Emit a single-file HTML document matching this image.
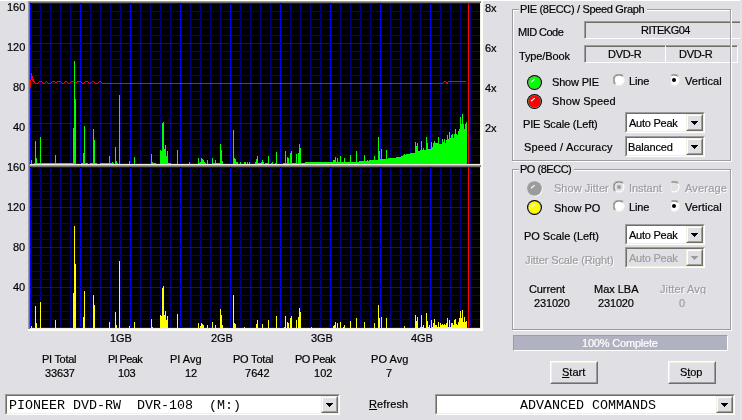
<!DOCTYPE html><html><head><meta charset="utf-8"><title>PIE/PO scan</title><style>
html,body{margin:0;padding:0;}body{width:742px;height:420px;overflow:hidden;background:#E0DFE3;position:relative;font-family:"Liberation Sans",sans-serif;font-size:11px;}
.t{position:absolute;white-space:pre;line-height:13px;height:13px;font-size:11px;will-change:transform;-webkit-text-stroke:0.2px;}
.m{position:absolute;white-space:pre;font-family:"Liberation Mono",monospace;font-size:13.33px;line-height:15px;height:15px;color:#000;will-change:transform}
u{text-decoration:underline;text-underline-offset:1px}
</style></head><body>
<svg style="position:absolute;left:28px;top:1px" width="455" height="166" viewBox="28 1 455 166" shape-rendering="crispEdges"><rect x="28" y="1" width="455" height="166" fill="#FFFFFF"/><rect x="28" y="1" width="453" height="164" fill="#9D9DA1"/><rect x="29" y="2" width="452" height="163" fill="#716F64"/><rect x="30" y="3" width="451" height="162" fill="#F1EFE2"/><rect x="30" y="3" width="450" height="161" fill="#000"/><path fill="#00008C" d="M40 3v161h1v-161zM50 3v161h1v-161zM60 3v161h1v-161zM70 3v161h1v-161zM90 3v161h1v-161zM100 3v161h1v-161zM110 3v161h1v-161zM120 3v161h1v-161zM140 3v161h1v-161zM150 3v161h1v-161zM160 3v161h1v-161zM170 3v161h1v-161zM190 3v161h1v-161zM200 3v161h1v-161zM210 3v161h1v-161zM220 3v161h1v-161zM240 3v161h1v-161zM250 3v161h1v-161zM260 3v161h1v-161zM270 3v161h1v-161zM290 3v161h1v-161zM300 3v161h1v-161zM310 3v161h1v-161zM320 3v161h1v-161zM340 3v161h1v-161zM350 3v161h1v-161zM360 3v161h1v-161zM370 3v161h1v-161zM390 3v161h1v-161zM400 3v161h1v-161zM410 3v161h1v-161zM420 3v161h1v-161zM440 3v161h1v-161zM450 3v161h1v-161zM460 3v161h1v-161zM470 3v161h1v-161zM30 11h450v1h-450zM30 19h450v1h-450zM30 27h450v1h-450zM30 35h450v1h-450zM30 51h450v1h-450zM30 59h450v1h-450zM30 67h450v1h-450zM30 75h450v1h-450zM30 91h450v1h-450zM30 99h450v1h-450zM30 107h450v1h-450zM30 115h450v1h-450zM30 131h450v1h-450zM30 139h450v1h-450zM30 147h450v1h-450zM30 155h450v1h-450z"/><path fill="#0000FF" d="M30 3v161h1v-161zM80 3v161h1v-161zM130 3v161h1v-161zM180 3v161h1v-161zM230 3v161h1v-161zM280 3v161h1v-161zM330 3v161h1v-161zM380 3v161h1v-161zM430 3v161h1v-161zM30 3h450v1h-450zM30 43h450v1h-450zM30 83h450v1h-450zM30 123h450v1h-450zM30 163h450v1h-450z"/><path fill="#00FF00" d="M31 164v-4h1v4zM34 164v-1h1v1zM35 164v-23h1v23zM36 164v-6h1v6zM37 164v-1h1v1zM38 164v-1h1v1zM39 164v-1h1v1zM40 164v-27h1v27zM41 164v-1h1v1zM42 164v-1h1v1zM43 164v-1h1v1zM44 164v-1h1v1zM45 164v-1h1v1zM46 164v-1h1v1zM47 164v-1h1v1zM48 164v-1h1v1zM49 164v-1h1v1zM50 164v-1h1v1zM51 164v-1h1v1zM52 164v-1h1v1zM53 164v-1h1v1zM54 164v-1h1v1zM55 164v-9h1v9zM56 164v-1h1v1zM57 164v-1h1v1zM58 164v-1h1v1zM59 164v-1h1v1zM60 164v-1h1v1zM61 164v-1h1v1zM62 164v-1h1v1zM63 164v-1h1v1zM64 164v-1h1v1zM65 164v-1h1v1zM66 164v-1h1v1zM67 164v-1h1v1zM68 164v-1h1v1zM69 164v-1h1v1zM70 164v-1h1v1zM71 164v-1h1v1zM72 164v-1h1v1zM73 164v-36h1v36zM74 164v-103h1v103zM75 164v-65h1v65zM81 164v-1h1v1zM82 164v-1h1v1zM83 164v-11h1v11zM84 164v-38h1v38zM85 164v-1h1v1zM86 164v-1h1v1zM87 164v-1h1v1zM90 164v-1h1v1zM91 164v-1h1v1zM92 164v-1h1v1zM93 164v-35h1v35zM94 164v-24h1v24zM95 164v-1h1v1zM96 164v-1h1v1zM100 164v-1h1v1zM101 164v-1h1v1zM102 164v-1h1v1zM103 164v-1h1v1zM104 164v-1h1v1zM105 164v-1h1v1zM106 164v-1h1v1zM107 164v-1h1v1zM108 164v-1h1v1zM109 164v-8h1v8zM110 164v-1h1v1zM111 164v-1h1v1zM112 164v-2h1v2zM113 164v-1h1v1zM115 164v-17h1v17zM116 164v-3h1v3zM117 164v-1h1v1zM119 164v-69h1v69zM129 164v-3h1v3zM134 164v-7h1v7zM151 164v-10h1v10zM152 164v-2h1v2zM153 164v-1h1v1zM154 164v-1h1v1zM155 164v-1h1v1zM160 164v-14h1v14zM161 164v-13h1v13zM162 164v-41h1v41zM163 164v-42h1v42zM164 164v-15h1v15zM165 164v-19h1v19zM166 164v-8h1v8zM167 164v-13h1v13zM168 164v-1h1v1zM169 164v-1h1v1zM170 164v-1h1v1zM177 164v-14h1v14zM189 164v-2h1v2zM198 164v-6h1v6zM199 164v-1h1v1zM200 164v-2h1v2zM201 164v-6h1v6zM202 164v-5h1v5zM203 164v-4h1v4zM204 164v-2h1v2zM205 164v-1h1v1zM207 164v-4h1v4zM212 164v-6h1v6zM213 164v-1h1v1zM214 164v-1h1v1zM215 164v-4h1v4zM216 164v-1h1v1zM217 164v-1h1v1zM218 164v-1h1v1zM219 164v-1h1v1zM220 164v-20h1v20zM221 164v-14h1v14zM222 164v-3h1v3zM233 164v-34h1v34zM234 164v-6h1v6zM235 164v-5h1v5zM236 164v-2h1v2zM237 164v-2h1v2zM240 164v-2h1v2zM244 164v-2h1v2zM245 164v-2h1v2zM247 164v-2h1v2zM249 164v-2h1v2zM255 164v-2h1v2zM256 164v-5h1v5zM257 164v-8h1v8zM258 164v-1h1v1zM259 164v-1h1v1zM260 164v-1h1v1zM261 164v-2h1v2zM262 164v-4h1v4zM263 164v-2h1v2zM265 164v-1h1v1zM266 164v-1h1v1zM267 164v-1h1v1zM268 164v-8h1v8zM271 164v-1h1v1zM272 164v-2h1v2zM275 164v-1h1v1zM276 164v-12h1v12zM283 164v-1h1v1zM284 164v-1h1v1zM285 164v-13h1v13zM286 164v-1h1v1zM287 164v-7h1v7zM288 164v-6h1v6zM289 164v-1h1v1zM290 164v-11h1v11zM291 164v-13h1v13zM292 164v-1h1v1zM293 164v-1h1v1zM294 164v-1h1v1zM295 164v-1h1v1zM296 164v-10h1v10zM297 164v-1h1v1zM298 164v-11h1v11zM299 164v-20h1v20zM300 164v-16h1v16zM301 164v-1h1v1zM302 164v-1h1v1zM303 164v-1h1v1zM304 164v-1h1v1zM305 164v-2h1v2zM306 164v-2h1v2zM307 164v-2h1v2zM308 164v-2h1v2zM309 164v-2h1v2zM310 164v-2h1v2zM311 164v-2h1v2zM312 164v-2h1v2zM313 164v-2h1v2zM314 164v-2h1v2zM315 164v-2h1v2zM316 164v-2h1v2zM317 164v-2h1v2zM318 164v-2h1v2zM319 164v-2h1v2zM320 164v-2h1v2zM321 164v-2h1v2zM322 164v-2h1v2zM323 164v-2h1v2zM324 164v-2h1v2zM325 164v-2h1v2zM326 164v-2h1v2zM327 164v-2h1v2zM328 164v-2h1v2zM329 164v-2h1v2zM330 164v-2h1v2zM331 164v-2h1v2zM332 164v-2h1v2zM333 164v-4h1v4zM334 164v-4h1v4zM335 164v-7h1v7zM336 164v-2h1v2zM337 164v-6h1v6zM338 164v-2h1v2zM339 164v-2h1v2zM340 164v-8h1v8zM341 164v-2h1v2zM342 164v-2h1v2zM343 164v-2h1v2zM344 164v-6h1v6zM345 164v-2h1v2zM346 164v-2h1v2zM347 164v-2h1v2zM348 164v-2h1v2zM349 164v-2h1v2zM350 164v-9h1v9zM351 164v-2h1v2zM352 164v-2h1v2zM353 164v-2h1v2zM354 164v-2h1v2zM355 164v-2h1v2zM356 164v-13h1v13zM357 164v-2h1v2zM358 164v-2h1v2zM359 164v-3h1v3zM360 164v-3h1v3zM361 164v-3h1v3zM362 164v-3h1v3zM363 164v-3h1v3zM364 164v-9h1v9zM365 164v-3h1v3zM366 164v-3h1v3zM367 164v-4h1v4zM368 164v-3h1v3zM369 164v-4h1v4zM370 164v-4h1v4zM371 164v-4h1v4zM372 164v-4h1v4zM373 164v-4h1v4zM374 164v-8h1v8zM375 164v-4h1v4zM376 164v-4h1v4zM377 164v-4h1v4zM378 164v-27h1v27zM379 164v-13h1v13zM380 164v-5h1v5zM381 164v-15h1v15zM382 164v-5h1v5zM383 164v-5h1v5zM384 164v-5h1v5zM385 164v-5h1v5zM386 164v-14h1v14zM387 164v-5h1v5zM388 164v-6h1v6zM389 164v-6h1v6zM390 164v-6h1v6zM391 164v-6h1v6zM392 164v-6h1v6zM393 164v-6h1v6zM394 164v-6h1v6zM395 164v-6h1v6zM396 164v-7h1v7zM397 164v-7h1v7zM398 164v-7h1v7zM399 164v-7h1v7zM400 164v-7h1v7zM401 164v-8h1v8zM402 164v-8h1v8zM403 164v-9h1v9zM404 164v-10h1v10zM405 164v-9h1v9zM406 164v-10h1v10zM407 164v-10h1v10zM408 164v-10h1v10zM409 164v-10h1v10zM410 164v-11h1v11zM411 164v-11h1v11zM412 164v-11h1v11zM413 164v-11h1v11zM414 164v-11h1v11zM415 164v-22h1v22zM416 164v-18h1v18zM417 164v-21h1v21zM418 164v-13h1v13zM419 164v-13h1v13zM420 164v-14h1v14zM421 164v-23h1v23zM422 164v-14h1v14zM423 164v-16h1v16zM424 164v-14h1v14zM425 164v-14h1v14zM426 164v-27h1v27zM427 164v-21h1v21zM428 164v-15h1v15zM429 164v-15h1v15zM430 164v-15h1v15zM431 164v-22h1v22zM432 164v-17h1v17zM433 164v-21h1v21zM434 164v-23h1v23zM435 164v-21h1v21zM436 164v-21h1v21zM437 164v-21h1v21zM438 164v-27h1v27zM439 164v-20h1v20zM440 164v-20h1v20zM441 164v-20h1v20zM442 164v-25h1v25zM443 164v-22h1v22zM444 164v-25h1v25zM445 164v-21h1v21zM446 164v-24h1v24zM447 164v-29h1v29zM448 164v-25h1v25zM449 164v-32h1v32zM450 164v-26h1v26zM451 164v-29h1v29zM452 164v-30h1v30zM453 164v-26h1v26zM454 164v-30h1v30zM455 164v-35h1v35zM456 164v-30h1v30zM457 164v-29h1v29zM458 164v-33h1v33zM459 164v-35h1v35zM460 164v-47h1v47zM461 164v-40h1v40zM462 164v-50h1v50zM463 164v-40h1v40zM464 164v-35h1v35zM465 164v-40h1v40zM466 164v-42h1v42z"/><path fill="#FF0000" d="M35 83h1v1h-1zM36 83h1v1h-1zM37 83h1v1h-1zM38 82h1v1h-1zM39 81h1v1h-1zM40 81h1v1h-1zM41 81h1v1h-1zM42 82h1v1h-1zM43 83h1v1h-1zM44 83h1v1h-1zM45 82h1v1h-1zM46 81h1v1h-1zM47 82h1v1h-1zM48 83h1v1h-1zM49 83h1v1h-1zM50 83h1v1h-1zM51 82h1v1h-1zM52 81h1v1h-1zM53 81h1v1h-1zM54 81h1v1h-1zM55 82h1v1h-1zM56 82h1v1h-1zM57 81h1v1h-1zM58 81h1v1h-1zM59 81h1v1h-1zM60 81h1v1h-1zM61 82h1v1h-1zM62 83h1v1h-1zM63 83h1v1h-1zM64 82h1v1h-1zM65 81h1v1h-1zM66 81h1v1h-1zM67 82h1v1h-1zM68 83h1v1h-1zM69 83h1v1h-1zM70 82h1v1h-1zM71 81h1v1h-1zM72 81h1v1h-1zM73 81h1v1h-1zM74 81h1v1h-1zM75 82h1v1h-1zM76 82h1v1h-1zM77 81h1v1h-1zM78 81h1v1h-1zM79 81h1v1h-1zM80 81h1v1h-1zM81 82h1v1h-1zM82 83h1v1h-1zM83 83h1v1h-1zM84 82h1v1h-1zM85 81h1v1h-1zM86 81h1v1h-1zM87 81h1v1h-1zM88 82h1v1h-1zM89 83h1v1h-1zM90 83h1v1h-1zM91 82h1v1h-1zM92 81h1v1h-1zM93 81h1v1h-1zM94 82h1v1h-1zM95 83h1v1h-1zM96 83h1v1h-1zM97 83h1v1h-1zM98 82h1v1h-1zM99 81h1v1h-1zM100 81h1v1h-1zM101 82h1v1h-1zM102 83h1v1h-1zM103 83h1v1h-1zM104 83h1v1h-1zM105 83h1v1h-1zM106 83h1v1h-1zM107 83h1v1h-1zM108 83h1v1h-1zM109 83h1v1h-1zM110 83h1v1h-1zM111 83h1v1h-1zM112 83h1v1h-1zM113 83h1v1h-1zM114 83h1v1h-1zM115 83h1v1h-1zM116 83h1v1h-1zM117 83h1v1h-1zM118 83h1v1h-1zM119 83h1v1h-1zM120 83h1v1h-1zM121 83h1v1h-1zM122 83h1v1h-1zM123 83h1v1h-1zM124 83h1v1h-1zM125 83h1v1h-1zM126 83h1v1h-1zM127 83h1v1h-1zM128 83h1v1h-1zM129 83h1v1h-1zM130 83h1v1h-1zM131 83h1v1h-1zM132 83h1v1h-1zM133 83h1v1h-1zM134 83h1v1h-1zM135 83h1v1h-1zM136 83h1v1h-1zM137 83h1v1h-1zM138 83h1v1h-1zM139 83h1v1h-1zM140 83h1v1h-1zM141 83h1v1h-1zM142 83h1v1h-1zM143 83h1v1h-1zM144 83h1v1h-1zM145 83h1v1h-1zM146 83h1v1h-1zM147 83h1v1h-1zM148 83h1v1h-1zM149 83h1v1h-1zM150 83h1v1h-1zM151 83h1v1h-1zM152 83h1v1h-1zM153 83h1v1h-1zM154 83h1v1h-1zM155 83h1v1h-1zM156 83h1v1h-1zM157 83h1v1h-1zM158 83h1v1h-1zM159 83h1v1h-1zM160 83h1v1h-1zM161 83h1v1h-1zM162 83h1v1h-1zM163 83h1v1h-1zM164 83h1v1h-1zM165 83h1v1h-1zM166 83h1v1h-1zM167 83h1v1h-1zM168 83h1v1h-1zM169 83h1v1h-1zM170 83h1v1h-1zM171 83h1v1h-1zM172 83h1v1h-1zM173 83h1v1h-1zM174 83h1v1h-1zM175 83h1v1h-1zM176 83h1v1h-1zM177 83h1v1h-1zM178 83h1v1h-1zM179 83h1v1h-1zM180 83h1v1h-1zM181 83h1v1h-1zM182 83h1v1h-1zM183 83h1v1h-1zM184 83h1v1h-1zM185 83h1v1h-1zM186 83h1v1h-1zM187 83h1v1h-1zM188 83h1v1h-1zM189 83h1v1h-1zM190 83h1v1h-1zM191 83h1v1h-1zM192 83h1v1h-1zM193 83h1v1h-1zM194 83h1v1h-1zM195 83h1v1h-1zM196 83h1v1h-1zM197 83h1v1h-1zM198 83h1v1h-1zM199 83h1v1h-1zM200 83h1v1h-1zM201 83h1v1h-1zM202 83h1v1h-1zM203 83h1v1h-1zM204 83h1v1h-1zM205 83h1v1h-1zM206 83h1v1h-1zM207 83h1v1h-1zM208 83h1v1h-1zM209 83h1v1h-1zM210 83h1v1h-1zM211 83h1v1h-1zM212 83h1v1h-1zM213 83h1v1h-1zM214 83h1v1h-1zM215 83h1v1h-1zM216 83h1v1h-1zM217 83h1v1h-1zM218 83h1v1h-1zM219 83h1v1h-1zM220 83h1v1h-1zM221 83h1v1h-1zM222 83h1v1h-1zM223 83h1v1h-1zM224 83h1v1h-1zM225 83h1v1h-1zM226 83h1v1h-1zM227 83h1v1h-1zM228 83h1v1h-1zM229 83h1v1h-1zM230 83h1v1h-1zM231 83h1v1h-1zM232 83h1v1h-1zM233 83h1v1h-1zM234 83h1v1h-1zM235 83h1v1h-1zM236 83h1v1h-1zM237 83h1v1h-1zM238 83h1v1h-1zM239 83h1v1h-1zM240 83h1v1h-1zM241 83h1v1h-1zM242 83h1v1h-1zM243 83h1v1h-1zM244 83h1v1h-1zM245 83h1v1h-1zM246 83h1v1h-1zM247 83h1v1h-1zM248 83h1v1h-1zM249 83h1v1h-1zM250 83h1v1h-1zM251 83h1v1h-1zM252 83h1v1h-1zM253 83h1v1h-1zM254 83h1v1h-1zM255 83h1v1h-1zM256 83h1v1h-1zM257 83h1v1h-1zM258 83h1v1h-1zM259 83h1v1h-1zM260 83h1v1h-1zM261 83h1v1h-1zM262 83h1v1h-1zM263 83h1v1h-1zM264 83h1v1h-1zM265 83h1v1h-1zM266 83h1v1h-1zM267 83h1v1h-1zM268 83h1v1h-1zM269 83h1v1h-1zM270 83h1v1h-1zM271 83h1v1h-1zM272 83h1v1h-1zM273 83h1v1h-1zM274 83h1v1h-1zM275 83h1v1h-1zM276 83h1v1h-1zM277 83h1v1h-1zM278 83h1v1h-1zM279 83h1v1h-1zM280 83h1v1h-1zM281 83h1v1h-1zM282 83h1v1h-1zM283 83h1v1h-1zM284 83h1v1h-1zM285 83h1v1h-1zM286 83h1v1h-1zM287 83h1v1h-1zM288 83h1v1h-1zM289 83h1v1h-1zM290 83h1v1h-1zM291 83h1v1h-1zM292 83h1v1h-1zM293 83h1v1h-1zM294 83h1v1h-1zM295 83h1v1h-1zM296 83h1v1h-1zM297 83h1v1h-1zM298 83h1v1h-1zM299 83h1v1h-1zM300 83h1v1h-1zM301 83h1v1h-1zM302 83h1v1h-1zM303 83h1v1h-1zM304 83h1v1h-1zM305 83h1v1h-1zM306 83h1v1h-1zM307 83h1v1h-1zM308 83h1v1h-1zM309 83h1v1h-1zM310 83h1v1h-1zM311 83h1v1h-1zM312 83h1v1h-1zM313 83h1v1h-1zM314 83h1v1h-1zM315 83h1v1h-1zM316 83h1v1h-1zM317 83h1v1h-1zM318 83h1v1h-1zM319 83h1v1h-1zM320 83h1v1h-1zM321 83h1v1h-1zM322 83h1v1h-1zM323 83h1v1h-1zM324 83h1v1h-1zM325 83h1v1h-1zM326 83h1v1h-1zM327 83h1v1h-1zM328 83h1v1h-1zM329 83h1v1h-1zM330 83h1v1h-1zM331 83h1v1h-1zM332 83h1v1h-1zM333 83h1v1h-1zM334 83h1v1h-1zM335 83h1v1h-1zM336 83h1v1h-1zM337 83h1v1h-1zM338 83h1v1h-1zM339 83h1v1h-1zM340 83h1v1h-1zM341 83h1v1h-1zM342 83h1v1h-1zM343 83h1v1h-1zM344 83h1v1h-1zM345 83h1v1h-1zM346 83h1v1h-1zM347 83h1v1h-1zM348 83h1v1h-1zM349 83h1v1h-1zM350 83h1v1h-1zM351 83h1v1h-1zM352 83h1v1h-1zM353 83h1v1h-1zM354 83h1v1h-1zM355 83h1v1h-1zM356 83h1v1h-1zM357 83h1v1h-1zM358 83h1v1h-1zM359 83h1v1h-1zM360 83h1v1h-1zM361 83h1v1h-1zM362 83h1v1h-1zM363 83h1v1h-1zM364 83h1v1h-1zM365 83h1v1h-1zM366 83h1v1h-1zM367 83h1v1h-1zM368 83h1v1h-1zM369 83h1v1h-1zM370 83h1v1h-1zM371 83h1v1h-1zM372 83h1v1h-1zM373 83h1v1h-1zM374 83h1v1h-1zM375 83h1v1h-1zM376 83h1v1h-1zM377 83h1v1h-1zM378 83h1v1h-1zM379 83h1v1h-1zM380 83h1v1h-1zM381 83h1v1h-1zM382 83h1v1h-1zM383 83h1v1h-1zM384 83h1v1h-1zM385 83h1v1h-1zM386 83h1v1h-1zM387 83h1v1h-1zM388 83h1v1h-1zM389 83h1v1h-1zM390 83h1v1h-1zM391 83h1v1h-1zM392 83h1v1h-1zM393 83h1v1h-1zM394 83h1v1h-1zM395 83h1v1h-1zM396 83h1v1h-1zM397 83h1v1h-1zM398 83h1v1h-1zM399 83h1v1h-1zM400 83h1v1h-1zM401 83h1v1h-1zM402 83h1v1h-1zM403 83h1v1h-1zM404 83h1v1h-1zM405 83h1v1h-1zM406 83h1v1h-1zM407 83h1v1h-1zM408 83h1v1h-1zM409 83h1v1h-1zM410 83h1v1h-1zM411 83h1v1h-1zM412 83h1v1h-1zM413 83h1v1h-1zM414 83h1v1h-1zM415 83h1v1h-1zM416 83h1v1h-1zM417 83h1v1h-1zM418 83h1v1h-1zM419 83h1v1h-1zM420 83h1v1h-1zM421 83h1v1h-1zM422 83h1v1h-1zM423 83h1v1h-1zM424 83h1v1h-1zM425 83h1v1h-1zM426 83h1v1h-1zM427 83h1v1h-1zM428 83h1v1h-1zM429 83h1v1h-1zM430 83h1v1h-1zM431 83h1v1h-1zM432 83h1v1h-1zM433 83h1v1h-1zM434 83h1v1h-1zM435 83h1v1h-1zM436 83h1v1h-1zM437 83h1v1h-1zM438 83h1v1h-1zM439 83h1v1h-1zM440 83h1v1h-1zM441 83h1v1h-1zM442 83h1v1h-1zM443 82h1v1h-1zM444 81h1v1h-1zM445 81h1v1h-1zM446 82h1v1h-1zM447 83h1v1h-1zM448 81h1v1h-1zM449 81h1v1h-1zM450 81h1v1h-1zM451 81h1v1h-1zM452 81h1v1h-1zM453 81h1v1h-1zM454 81h1v1h-1zM455 81h1v1h-1zM456 81h1v1h-1zM457 81h1v1h-1zM458 81h1v1h-1zM459 81h1v1h-1zM460 81h1v1h-1zM461 81h1v1h-1zM462 81h1v1h-1zM463 81h1v1h-1zM464 81h1v1h-1zM465 81h1v1h-1zM446 83h1v1h-1zM447 82h1v1h-1zM30 80v8h1v-8zM31 73v7h1v-7zM32 76v5h1v-5zM33 79v3h1v-3zM34 81v2h1v-2z"/><rect x="468" y="3" width="1" height="161" fill="#FF0000"/></svg>
<svg style="position:absolute;left:28px;top:165px" width="455" height="166" viewBox="28 165 455 166" shape-rendering="crispEdges"><rect x="28" y="165" width="455" height="166" fill="#FFFFFF"/><rect x="28" y="165" width="453" height="164" fill="#9D9DA1"/><rect x="29" y="166" width="452" height="163" fill="#716F64"/><rect x="30" y="167" width="451" height="162" fill="#F1EFE2"/><rect x="30" y="167" width="450" height="161" fill="#000"/><path fill="#00008C" d="M40 167v161h1v-161zM50 167v161h1v-161zM60 167v161h1v-161zM70 167v161h1v-161zM90 167v161h1v-161zM100 167v161h1v-161zM110 167v161h1v-161zM120 167v161h1v-161zM140 167v161h1v-161zM150 167v161h1v-161zM160 167v161h1v-161zM170 167v161h1v-161zM190 167v161h1v-161zM200 167v161h1v-161zM210 167v161h1v-161zM220 167v161h1v-161zM240 167v161h1v-161zM250 167v161h1v-161zM260 167v161h1v-161zM270 167v161h1v-161zM290 167v161h1v-161zM300 167v161h1v-161zM310 167v161h1v-161zM320 167v161h1v-161zM340 167v161h1v-161zM350 167v161h1v-161zM360 167v161h1v-161zM370 167v161h1v-161zM390 167v161h1v-161zM400 167v161h1v-161zM410 167v161h1v-161zM420 167v161h1v-161zM440 167v161h1v-161zM450 167v161h1v-161zM460 167v161h1v-161zM470 167v161h1v-161zM30 175h450v1h-450zM30 183h450v1h-450zM30 191h450v1h-450zM30 199h450v1h-450zM30 215h450v1h-450zM30 223h450v1h-450zM30 231h450v1h-450zM30 239h450v1h-450zM30 255h450v1h-450zM30 263h450v1h-450zM30 271h450v1h-450zM30 279h450v1h-450zM30 295h450v1h-450zM30 303h450v1h-450zM30 311h450v1h-450zM30 319h450v1h-450z"/><path fill="#0000FF" d="M30 167v161h1v-161zM80 167v161h1v-161zM130 167v161h1v-161zM180 167v161h1v-161zM230 167v161h1v-161zM280 167v161h1v-161zM330 167v161h1v-161zM380 167v161h1v-161zM430 167v161h1v-161zM30 167h450v1h-450zM30 207h450v1h-450zM30 247h450v1h-450zM30 287h450v1h-450zM30 327h450v1h-450z"/><path fill="#FFFF00" d="M31 328v-2h1v2zM35 328v-22h1v22zM36 328v-5h1v5zM40 328v-26h1v26zM55 328v-8h1v8zM73 328v-35h1v35zM74 328v-102h1v102zM75 328v-64h1v64zM83 328v-11h1v11zM84 328v-37h1v37zM93 328v-33h1v33zM94 328v-23h1v23zM109 328v-6h1v6zM115 328v-16h1v16zM116 328v-3h1v3zM119 328v-67h1v67zM129 328v-2h1v2zM134 328v-6h1v6zM151 328v-9h1v9zM152 328v-1h1v1zM160 328v-13h1v13zM161 328v-12h1v12zM162 328v-40h1v40zM163 328v-42h1v42zM164 328v-13h1v13zM165 328v-17h1v17zM166 328v-8h1v8zM167 328v-12h1v12zM177 328v-14h1v14zM198 328v-5h1v5zM200 328v-2h1v2zM201 328v-5h1v5zM202 328v-4h1v4zM203 328v-3h1v3zM207 328v-3h1v3zM212 328v-6h1v6zM215 328v-3h1v3zM220 328v-19h1v19zM221 328v-13h1v13zM222 328v-3h1v3zM233 328v-33h1v33zM234 328v-5h1v5zM235 328v-4h1v4zM244 328v-1h1v1zM256 328v-4h1v4zM257 328v-8h1v8zM262 328v-4h1v4zM268 328v-8h1v8zM276 328v-12h1v12zM284 328v-1h1v1zM285 328v-12h1v12zM287 328v-6h1v6zM288 328v-5h1v5zM290 328v-10h1v10zM291 328v-12h1v12zM296 328v-8h1v8zM298 328v-11h1v11zM299 328v-20h1v20zM300 328v-16h1v16zM311 328v-1h1v1zM333 328v-2h1v2zM334 328v-3h1v3zM335 328v-6h1v6zM337 328v-5h1v5zM340 328v-6h1v6zM343 328v-1h1v1zM344 328v-3h1v3zM350 328v-7h1v7zM356 328v-10h1v10zM364 328v-6h1v6zM374 328v-5h1v5zM378 328v-23h1v23zM379 328v-10h1v10zM381 328v-11h1v11zM386 328v-10h1v10zM404 328v-2h1v2zM415 328v-13h1v13zM416 328v-7h1v7zM417 328v-11h1v11zM420 328v-1h1v1zM421 328v-13h1v13zM422 328v-1h1v1zM423 328v-3h1v3zM426 328v-15h1v15zM427 328v-7h1v7zM428 328v-1h1v1zM429 328v-3h1v3zM431 328v-8h1v8zM432 328v-1h1v1zM433 328v-5h1v5zM434 328v-9h1v9zM435 328v-3h1v3zM436 328v-3h1v3zM437 328v-1h1v1zM438 328v-6h1v6zM439 328v-1h1v1zM440 328v-5h1v5zM441 328v-3h1v3zM442 328v-4h1v4zM443 328v-3h1v3zM444 328v-4h1v4zM445 328v-3h1v3zM446 328v-5h1v5zM447 328v-10h1v10zM448 328v-1h1v1zM449 328v-8h1v8zM450 328v-1h1v1zM451 328v-5h1v5zM452 328v-5h1v5zM453 328v-3h1v3zM454 328v-8h1v8zM455 328v-9h1v9zM456 328v-4h1v4zM457 328v-3h1v3zM458 328v-6h1v6zM459 328v-10h1v10zM460 328v-17h1v17zM461 328v-10h1v10zM462 328v-18h1v18zM463 328v-6h1v6zM464 328v-11h1v11zM465 328v-6h1v6zM466 328v-7h1v7z"/><rect x="468" y="167" width="1" height="161" fill="#FF0000"/></svg>
<div style="position:absolute;left:584px;top:21px;width:170px;height:18px;box-sizing:border-box;border:1px solid;border-color:#9D9DA1 #FFFFFF #FFFFFF #9D9DA1;background:#E0DFE3"><div style="position:absolute;left:0;top:0;right:0;bottom:0;border-top:1px solid #716F64;border-left:1px solid #716F64"></div></div>
<div style="position:absolute;left:660px;top:45px;width:78px;height:18px;box-sizing:border-box;border:1px solid;border-color:#9D9DA1 #FFFFFF #FFFFFF #9D9DA1;background:#E0DFE3"><div style="position:absolute;left:0;top:0;right:0;bottom:0;border-top:1px solid #716F64;border-left:1px solid #716F64"></div></div>
<div style="position:absolute;left:584px;top:45px;width:82px;height:18px;box-sizing:border-box;border:1px solid;border-color:#9D9DA1 #FFFFFF #FFFFFF #9D9DA1;background:#E0DFE3"><div style="position:absolute;left:0;top:0;right:0;bottom:0;border-top:1px solid #716F64;border-left:1px solid #716F64"></div></div>
<div style="position:absolute;left:513px;top:10px;width:219px;height:152px;box-sizing:border-box;border:1px solid #FFFFFF"></div><div style="position:absolute;left:512px;top:9px;width:219px;height:152px;box-sizing:border-box;border:1px solid #9D9DA1"></div>
<div style="position:absolute;left:519px;top:4px;width:128px;height:12px;background:#E0DFE3"></div>
<svg style="position:absolute;left:526px;top:74px" width="17" height="17"><circle cx="8.5" cy="8.5" r="7.5" fill="#000"/><circle cx="8.5" cy="8.5" r="6.55" fill="#808078"/><circle cx="8.5" cy="8.5" r="6" fill="#00FF00"/><path d="M8.7 5.1L5 8.3" stroke="#fff" stroke-width="1.2" fill="none"/></svg>
<svg style="position:absolute;left:526px;top:93px" width="17" height="17"><circle cx="8.5" cy="8.5" r="7.5" fill="#000"/><circle cx="8.5" cy="8.5" r="6.55" fill="#808078"/><circle cx="8.5" cy="8.5" r="6" fill="#FF0000"/><path d="M8.7 5.1L5 8.3" stroke="#fff" stroke-width="1.2" fill="none"/></svg>
<svg style="position:absolute;left:613px;top:74px;" width="12" height="12"><circle cx="6" cy="6" r="5.5" fill="#FFFFFF"/><path d="M1.6 10.4A6 6 0 0 1 10.4 1.6" stroke="#9D9DA1" stroke-width="1" fill="none"/><circle cx="6" cy="6" r="4.6" fill="#F1EFE2"/><path d="M2.4 9.6A5 5 0 0 1 9.6 2.4" stroke="#716F64" stroke-width="1" fill="none"/><circle cx="6" cy="6" r="4" fill="#FFF"/></svg>
<svg style="position:absolute;left:668px;top:74px;clip-path:inset(0 0 0 3.5px);" width="12" height="12"><circle cx="6" cy="6" r="5.5" fill="#FFFFFF"/><path d="M1.6 10.4A6 6 0 0 1 10.4 1.6" stroke="#9D9DA1" stroke-width="1" fill="none"/><circle cx="6" cy="6" r="4.6" fill="#F1EFE2"/><path d="M2.4 9.6A5 5 0 0 1 9.6 2.4" stroke="#716F64" stroke-width="1" fill="none"/><circle cx="6" cy="6" r="4" fill="#FFF"/><circle cx="6" cy="6" r="2" fill="#000"/></svg>
<div style="position:absolute;left:625px;top:112px;width:80px;height:21px;box-sizing:border-box;border:1px solid;border-color:#9D9DA1 #FFFFFF #FFFFFF #9D9DA1;background:#FFF"><div style="position:absolute;left:0;top:0;right:0;bottom:0;border:1px solid;border-color:#716F64 #F1EFE2 #F1EFE2 #716F64"></div><div style="position:absolute;left:60px;top:1px;width:17px;height:17px;box-sizing:border-box;border:1px solid;border-color:#F1EFE2 #716F64 #716F64 #F1EFE2;background:#E0DFE3"><div style="position:absolute;left:0;top:0;right:0;bottom:0;border:1px solid;border-color:#FFFFFF #9D9DA1 #9D9DA1 #FFFFFF"></div><svg style="position:absolute;left:4px;top:6px" width="7" height="4" shape-rendering="crispEdges"><path fill="#000" d="M0 0h7v1h-7zM1 1h5v1h-5zM2 2h3v1h-3zM3 3h1v1h-1z"/></svg></div></div>
<div style="position:absolute;left:625px;top:136px;width:80px;height:21px;box-sizing:border-box;border:1px solid;border-color:#9D9DA1 #FFFFFF #FFFFFF #9D9DA1;background:#FFF"><div style="position:absolute;left:0;top:0;right:0;bottom:0;border:1px solid;border-color:#716F64 #F1EFE2 #F1EFE2 #716F64"></div><div style="position:absolute;left:60px;top:1px;width:17px;height:17px;box-sizing:border-box;border:1px solid;border-color:#F1EFE2 #716F64 #716F64 #F1EFE2;background:#E0DFE3"><div style="position:absolute;left:0;top:0;right:0;bottom:0;border:1px solid;border-color:#FFFFFF #9D9DA1 #9D9DA1 #FFFFFF"></div><svg style="position:absolute;left:4px;top:6px" width="7" height="4" shape-rendering="crispEdges"><path fill="#000" d="M0 0h7v1h-7zM1 1h5v1h-5zM2 2h3v1h-3zM3 3h1v1h-1z"/></svg></div></div>
<div style="position:absolute;left:513px;top:170px;width:219px;height:161px;box-sizing:border-box;border:1px solid #FFFFFF"></div><div style="position:absolute;left:512px;top:169px;width:219px;height:161px;box-sizing:border-box;border:1px solid #9D9DA1"></div>
<div style="position:absolute;left:519px;top:164px;width:55px;height:12px;background:#E0DFE3"></div>
<svg style="position:absolute;left:526px;top:179.5px" width="18" height="18"><circle cx="9.3" cy="9.3" r="7.2" fill="#fff"/><circle cx="8.5" cy="8.5" r="7.3" fill="#9C9C9C"/><path d="M8.7 5.1L5 8.3" stroke="#fff" stroke-width="1.2" fill="none"/></svg>
<svg style="position:absolute;left:526px;top:199px" width="17" height="17"><circle cx="8.5" cy="8.5" r="7.5" fill="#000"/><circle cx="8.5" cy="8.5" r="6.55" fill="#808078"/><circle cx="8.5" cy="8.5" r="6" fill="#FFFF00"/><path d="M8.7 5.1L5 8.3" stroke="#fff" stroke-width="1.2" fill="none"/></svg>
<svg style="position:absolute;left:613px;top:181px;" width="12" height="12"><circle cx="6" cy="6" r="5.5" fill="#FFFFFF"/><path d="M1.6 10.4A6 6 0 0 1 10.4 1.6" stroke="#9D9DA1" stroke-width="1" fill="none"/><circle cx="6" cy="6" r="4.6" fill="#F1EFE2"/><path d="M2.4 9.6A5 5 0 0 1 9.6 2.4" stroke="#716F64" stroke-width="1" fill="none"/><circle cx="6" cy="6" r="4" fill="#E0DFE3"/><circle cx="6" cy="6" r="2" fill="#9D9DA1"/></svg>
<svg style="position:absolute;left:668px;top:181px;clip-path:inset(0 0 0 3.5px);" width="12" height="12"><circle cx="6" cy="6" r="5.5" fill="#FFFFFF"/><path d="M1.6 10.4A6 6 0 0 1 10.4 1.6" stroke="#9D9DA1" stroke-width="1" fill="none"/><circle cx="6" cy="6" r="4.6" fill="#F1EFE2"/><path d="M2.4 9.6A5 5 0 0 1 9.6 2.4" stroke="#716F64" stroke-width="1" fill="none"/><circle cx="6" cy="6" r="4" fill="#E0DFE3"/></svg>
<svg style="position:absolute;left:613px;top:200px;" width="12" height="12"><circle cx="6" cy="6" r="5.5" fill="#FFFFFF"/><path d="M1.6 10.4A6 6 0 0 1 10.4 1.6" stroke="#9D9DA1" stroke-width="1" fill="none"/><circle cx="6" cy="6" r="4.6" fill="#F1EFE2"/><path d="M2.4 9.6A5 5 0 0 1 9.6 2.4" stroke="#716F64" stroke-width="1" fill="none"/><circle cx="6" cy="6" r="4" fill="#FFF"/></svg>
<svg style="position:absolute;left:668px;top:200px;clip-path:inset(0 0 0 3.5px);" width="12" height="12"><circle cx="6" cy="6" r="5.5" fill="#FFFFFF"/><path d="M1.6 10.4A6 6 0 0 1 10.4 1.6" stroke="#9D9DA1" stroke-width="1" fill="none"/><circle cx="6" cy="6" r="4.6" fill="#F1EFE2"/><path d="M2.4 9.6A5 5 0 0 1 9.6 2.4" stroke="#716F64" stroke-width="1" fill="none"/><circle cx="6" cy="6" r="4" fill="#FFF"/><circle cx="6" cy="6" r="2" fill="#000"/></svg>
<div style="position:absolute;left:625px;top:224px;width:80px;height:21px;box-sizing:border-box;border:1px solid;border-color:#9D9DA1 #FFFFFF #FFFFFF #9D9DA1;background:#FFF"><div style="position:absolute;left:0;top:0;right:0;bottom:0;border:1px solid;border-color:#716F64 #F1EFE2 #F1EFE2 #716F64"></div><div style="position:absolute;left:60px;top:1px;width:17px;height:17px;box-sizing:border-box;border:1px solid;border-color:#F1EFE2 #716F64 #716F64 #F1EFE2;background:#E0DFE3"><div style="position:absolute;left:0;top:0;right:0;bottom:0;border:1px solid;border-color:#FFFFFF #9D9DA1 #9D9DA1 #FFFFFF"></div><svg style="position:absolute;left:4px;top:6px" width="7" height="4" shape-rendering="crispEdges"><path fill="#000" d="M0 0h7v1h-7zM1 1h5v1h-5zM2 2h3v1h-3zM3 3h1v1h-1z"/></svg></div></div>
<div style="position:absolute;left:625px;top:247px;width:80px;height:21px;box-sizing:border-box;border:1px solid;border-color:#9D9DA1 #FFFFFF #FFFFFF #9D9DA1;background:#E0DFE3"><div style="position:absolute;left:0;top:0;right:0;bottom:0;border:1px solid;border-color:#716F64 #F1EFE2 #F1EFE2 #716F64"></div><div style="position:absolute;left:60px;top:1px;width:17px;height:17px;box-sizing:border-box;border:1px solid;border-color:#F1EFE2 #716F64 #716F64 #F1EFE2;background:#E0DFE3"><div style="position:absolute;left:0;top:0;right:0;bottom:0;border:1px solid;border-color:#FFFFFF #9D9DA1 #9D9DA1 #FFFFFF"></div><svg style="position:absolute;left:4px;top:6px" width="7" height="4" shape-rendering="crispEdges"><path fill="#9D9DA1" d="M0 0h7v1h-7zM1 1h5v1h-5zM2 2h3v1h-3zM3 3h1v1h-1z"/></svg></div></div>
<div style="position:absolute;left:513px;top:335px;width:215px;height:16px;box-sizing:border-box;background:#B0B1C1;border:1px solid;border-color:#9D9DA1 #FFFFFF #FFFFFF #9D9DA1"></div>
<div style="position:absolute;left:550px;top:361px;width:48px;height:23px;box-sizing:border-box;border:1px solid;border-color:#FFFFFF #716F64 #716F64 #FFFFFF;background:#E0DFE3"><div style="position:absolute;left:0;top:0;right:0;bottom:0;border:1px solid;border-color:#F1EFE2 #9D9DA1 #9D9DA1 #F1EFE2"></div></div>
<div style="position:absolute;left:668px;top:361px;width:48px;height:23px;box-sizing:border-box;border:1px solid;border-color:#FFFFFF #716F64 #716F64 #FFFFFF;background:#E0DFE3"><div style="position:absolute;left:0;top:0;right:0;bottom:0;border:1px solid;border-color:#F1EFE2 #9D9DA1 #9D9DA1 #F1EFE2"></div></div>
<div style="position:absolute;left:5px;top:394px;width:335px;height:21px;box-sizing:border-box;border:1px solid;border-color:#9D9DA1 #FFFFFF #FFFFFF #9D9DA1;background:#FFF"><div style="position:absolute;left:0;top:0;right:0;bottom:0;border:1px solid;border-color:#716F64 #F1EFE2 #F1EFE2 #716F64"></div><div style="position:absolute;left:315px;top:1px;width:17px;height:17px;box-sizing:border-box;border:1px solid;border-color:#F1EFE2 #716F64 #716F64 #F1EFE2;background:#E0DFE3"><div style="position:absolute;left:0;top:0;right:0;bottom:0;border:1px solid;border-color:#FFFFFF #9D9DA1 #9D9DA1 #FFFFFF"></div><svg style="position:absolute;left:4px;top:6px" width="7" height="4" shape-rendering="crispEdges"><path fill="#000" d="M0 0h7v1h-7zM1 1h5v1h-5zM2 2h3v1h-3zM3 3h1v1h-1z"/></svg></div></div>
<div style="position:absolute;left:435px;top:394px;width:300px;height:21px;box-sizing:border-box;border:1px solid;border-color:#9D9DA1 #FFFFFF #FFFFFF #9D9DA1;background:#FFF"><div style="position:absolute;left:0;top:0;right:0;bottom:0;border:1px solid;border-color:#716F64 #F1EFE2 #F1EFE2 #716F64"></div><div style="position:absolute;left:280px;top:1px;width:17px;height:17px;box-sizing:border-box;border:1px solid;border-color:#F1EFE2 #716F64 #716F64 #F1EFE2;background:#E0DFE3"><div style="position:absolute;left:0;top:0;right:0;bottom:0;border:1px solid;border-color:#FFFFFF #9D9DA1 #9D9DA1 #FFFFFF"></div><svg style="position:absolute;left:4px;top:6px" width="7" height="4" shape-rendering="crispEdges"><path fill="#000" d="M0 0h7v1h-7zM1 1h5v1h-5zM2 2h3v1h-3zM3 3h1v1h-1z"/></svg></div></div>
<div style="position:absolute;left:0;top:0;width:740px;height:1px;background:#fff"></div>
<div style="position:absolute;left:740px;top:0;width:2px;height:420px;background:#E4E3E7"></div>
<span class="t" id="yl0" style="top:1px;color:#000;right:716.7px;">160</span>
<span class="t" id="yl1" style="top:41px;color:#000;right:716.7px;">120</span>
<span class="t" id="yl2" style="top:81px;color:#000;right:716.7px;">80</span>
<span class="t" id="yl3" style="top:121px;color:#000;right:716.7px;">40</span>
<span class="t" id="yl4" style="top:161px;color:#000;right:716.7px;">160</span>
<span class="t" id="yl5" style="top:201px;color:#000;right:716.7px;">120</span>
<span class="t" id="yl6" style="top:241px;color:#000;right:716.7px;">80</span>
<span class="t" id="yl7" style="top:281px;color:#000;right:716.7px;">40</span>
<span class="t" id="yr0" style="top:2px;color:#000;left:484.7px;">8x</span>
<span class="t" id="yr1" style="top:42px;color:#000;left:484.6px;">6x</span>
<span class="t" id="yr2" style="top:82px;color:#000;left:484.9px;">4x</span>
<span class="t" id="yr3" style="top:122px;color:#000;left:484.6px;">2x</span>
<span class="t" id="xg0" style="top:332px;color:#000;left:110.4px;letter-spacing:-0.072px;">1GB</span>
<span class="t" id="xg1" style="top:332px;color:#000;left:210.6px;letter-spacing:-0.072px;">2GB</span>
<span class="t" id="xg2" style="top:332px;color:#000;left:310.8px;letter-spacing:-0.072px;">3GB</span>
<span class="t" id="xg3" style="top:332px;color:#000;left:410.9px;letter-spacing:-0.072px;">4GB</span>
<span class="t" id="sa0" style="top:353px;color:#000;left:42.3px;letter-spacing:-0.287px;">PI Total</span>
<span class="t" id="sb0" style="top:367px;color:#000;left:45.4px;letter-spacing:-0.159px;">33637</span>
<span class="t" id="sa1" style="top:353px;color:#000;left:108.1px;letter-spacing:-0.647px;">PI Peak</span>
<span class="t" id="sb1" style="top:367px;color:#000;left:117.8px;letter-spacing:-0.320px;">103</span>
<span class="t" id="sa2" style="top:353px;color:#000;left:169.9px;letter-spacing:-0.002px;">PI Avg</span>
<span class="t" id="sb2" style="top:367px;color:#000;left:185.4px;letter-spacing:-0.025px;">12</span>
<span class="t" id="sa3" style="top:353px;color:#000;left:233.3px;letter-spacing:-0.213px;">PO Total</span>
<span class="t" id="sb3" style="top:367px;color:#000;left:245.3px;letter-spacing:0.029px;">7642</span>
<span class="t" id="sa4" style="top:353px;color:#000;left:295.0px;letter-spacing:-0.533px;">PO Peak</span>
<span class="t" id="sb4" style="top:367px;color:#000;left:314.2px;letter-spacing:0.014px;">102</span>
<span class="t" id="sa5" style="top:353px;color:#000;left:371.1px;letter-spacing:0.048px;">PO Avg</span>
<span class="t" id="sb5" style="top:367px;color:#000;left:386.4px;letter-spacing:0.375px;">7</span>
<span class="t" id="g1t" style="top:3px;color:#000;left:519.8px;letter-spacing:-0.323px;">PIE (8ECC) / Speed Graph</span>
<span class="t" id="mid" style="top:26px;color:#000;left:517.9px;letter-spacing:-0.529px;">MID Code</span>
<span class="t" id="tb" style="top:50px;color:#000;left:518.6px;letter-spacing:-0.132px;">Type/Book</span>
<span class="t" id="ritek" style="top:24px;color:#000;left:640.8px;letter-spacing:-0.548px;">RITEKG04</span>
<span class="t" id="dvd1" style="top:48px;color:#000;left:608.3px;letter-spacing:-0.289px;">DVD-R</span>
<span class="t" id="dvd2" style="top:48px;color:#000;left:678.9px;letter-spacing:-0.289px;">DVD-R</span>
<span class="t" id="spie" style="top:76px;color:#000;left:552.1px;letter-spacing:-0.189px;">Show PIE</span>
<span class="t" id="sspd" style="top:95px;color:#000;left:552.1px;letter-spacing:0.141px;">Show Speed</span>
<span class="t" id="line1" style="top:75px;color:#000;left:628.6px;letter-spacing:-0.124px;">Line</span>
<span class="t" id="vert1" style="top:75px;color:#000;left:685.4px;letter-spacing:0.090px;">Vertical</span>
<span class="t" id="pies" style="top:118px;color:#000;left:523.1px;letter-spacing:-0.153px;">PIE Scale (Left)</span>
<span class="t" id="spac" style="top:141px;color:#000;left:524.1px;letter-spacing:0.199px;">Speed / Accuracy</span>
<span class="t" id="ap1" style="top:117px;color:#000;left:629.2px;letter-spacing:-0.252px;">Auto Peak</span>
<span class="t" id="bal" style="top:141px;color:#000;left:628.3px;letter-spacing:-0.134px;">Balanced</span>
<span class="t" id="g2t" style="top:163px;color:#000;left:519.8px;letter-spacing:-0.481px;">PO (8ECC)</span>
<span class="t" id="sjit" style="top:182px;color:#9D9DA1;text-shadow:1px 1px 0 #fff;left:554.2px;letter-spacing:0.034px;">Show Jitter</span>
<span class="t" id="spo" style="top:202px;color:#000;left:554.2px;letter-spacing:-0.024px;">Show PO</span>
<span class="t" id="inst" style="top:182px;color:#9D9DA1;text-shadow:1px 1px 0 #fff;left:628.5px;letter-spacing:-0.033px;">Instant</span>
<span class="t" id="avg" style="top:182px;color:#9D9DA1;text-shadow:1px 1px 0 #fff;left:685.2px;letter-spacing:0.188px;">Average</span>
<span class="t" id="line2" style="top:201px;color:#000;left:628.6px;letter-spacing:-0.124px;">Line</span>
<span class="t" id="vert2" style="top:201px;color:#000;left:685.4px;letter-spacing:0.090px;">Vertical</span>
<span class="t" id="pos" style="top:230px;color:#000;left:523.9px;letter-spacing:-0.027px;">PO Scale (Left)</span>
<span class="t" id="jits" style="top:254px;color:#9D9DA1;text-shadow:1px 1px 0 #fff;left:524.6px;letter-spacing:-0.099px;">Jitter Scale (Right)</span>
<span class="t" id="ap2" style="top:229px;color:#000;left:629.2px;letter-spacing:-0.252px;">Auto Peak</span>
<span class="t" id="ap3" style="top:252px;color:#9D9DA1;left:629.2px;letter-spacing:-0.252px;">Auto Peak</span>
<span class="t" id="cur" style="top:283px;color:#000;left:529.4px;letter-spacing:-0.098px;">Current</span>
<span class="t" id="curv" style="top:297px;color:#000;left:533.7px;letter-spacing:-0.153px;">231020</span>
<span class="t" id="mlba" style="top:283px;color:#000;left:593.8px;letter-spacing:-0.020px;">Max LBA</span>
<span class="t" id="mlbav" style="top:297px;color:#000;left:598.4px;letter-spacing:-0.153px;">231020</span>
<span class="t" id="javg" style="top:283px;color:#9D9DA1;text-shadow:1px 1px 0 #fff;clip-path:inset(0 0 2px 0);left:660.0px;letter-spacing:0.115px;">Jitter Avg</span>
<span class="t" id="javgv" style="top:297px;color:#9D9DA1;left:678.5px;">0</span>
<span class="t" id="prog" style="top:337px;color:#fff;left:581.6px;letter-spacing:-0.191px;">100% Complete</span>
<span class="t" id="start" style="top:366px;color:#000;left:561.7px;letter-spacing:0.010px;"><u>S</u>tart</span>
<span class="t" id="stop" style="top:366px;color:#000;left:680.3px;letter-spacing:-0.064px;">S<u>t</u>op</span>
<span class="t" id="refresh" style="top:398px;color:#000;left:368.7px;letter-spacing:0.096px;"><u>R</u>efresh</span>
<span class="m" id="drive" style="left:9px;top:398px">PIONEER DVD-RW  DVR-108  (M:)</span>
<span class="m" id="adv" style="left:520px;top:398px">ADVANCED COMMANDS</span>
</body></html>
